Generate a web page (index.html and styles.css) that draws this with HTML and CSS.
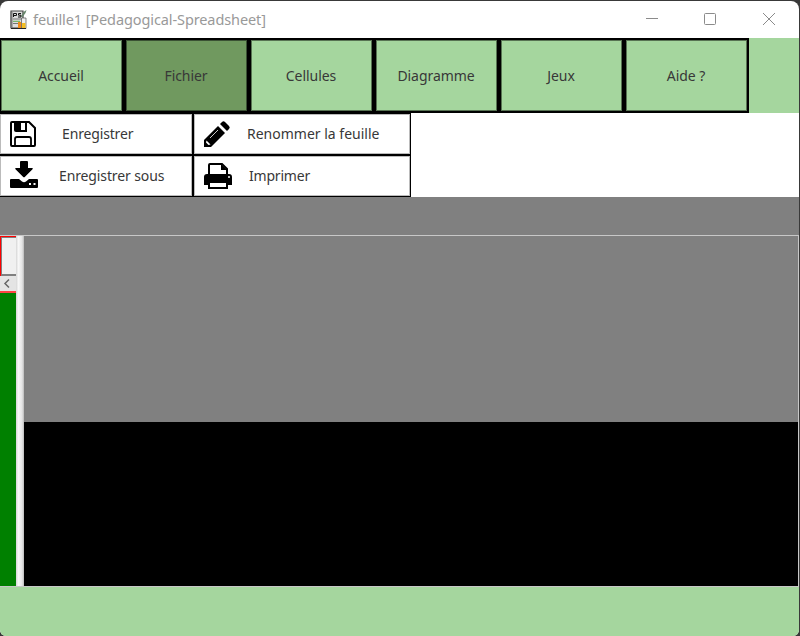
FILE: index.html
```html
<!DOCTYPE html>
<html lang="fr">
<head>
<meta charset="utf-8">
<title>feuille1 [Pedagogical-Spreadsheet]</title>
<link rel="stylesheet" href="styles.css">
</head>
<body>
<div class="window">
  <header class="titlebar">
    <svg class="app-icon" width="20" height="22" viewBox="0 0 20 22">
      <path d="M2 2h12v17H2z" fill="#ddd" stroke="#444" stroke-width="1.2"/>
      <path d="M1.500 3v16h2V3z" fill="#777"/>
      <path d="M4.500 8V4.500h3v2h-3M12 4.500H9.500v1.700H12V8H9" fill="none" stroke="#111"/>
      <path d="M4 10h9M4 14.500h5" stroke="#777"/><path d="M4 12.300h7" stroke="#62ad50"/>
      <path d="M12 8l2.500-5 3-2-1 3-3 4z" fill="#66856b"/>
      <path d="M9 13h3.500v6.500H9z" fill="#f08a18"/><path d="M12.500 9h4.500v10.500h-4.500z" fill="#eee" stroke="#555" stroke-width=".7"/>
      <path d="M13 14h3.500v5H13z" fill="#f4be20"/><path d="M2 19.500h15" stroke="#222"/>
    </svg>
    <h1 class="title"><span>feuille1 [Pedagogical-Spreadsheet]</span></h1>
    <svg class="controls" width="140" height="20" viewBox="0 0 140 20" fill="none" stroke="#8b8b8b">
      <path d="M6 8.500h12"/><rect x="64.500" y="3.500" width="11" height="11" rx="1"/><path d="M123 3l12 12M135 3l-12 12"/>
    </svg>
  </header>
  <nav class="tabs">
    <button class="tab">Accueil</button>
    <button class="tab active">Fichier</button>
    <button class="tab">Cellules</button>
    <button class="tab">Diagramme</button>
    <button class="tab">Jeux</button>
    <button class="tab">Aide ?</button>
  </nav>
  <section class="menu">
    <button class="item save">
      <svg width="28" height="28" viewBox="0 0 28 28"><path d="M2 2h17l6 6v17a1 1 0 0 1-1 1H2a1 1 0 0 1-1-1V3a1 1 0 0 1 1-1z" fill="#fff" stroke="#000" stroke-width="2"/><path d="M4 2h13v10H6q-2 0-2-2z"/><path d="M11 3h4v7h-4z" fill="#fff"/><path d="M5 26v-7q0-2 2-2h12q2 0 2 2v7" fill="none" stroke="#000" stroke-width="1.800"/></svg>
      <span>Enregistrer</span></button>
    <button class="item rename">
      <svg width="28" height="28" viewBox="0 0 28 28"><path d="M0 27v-7L14 6l7 7L7 27z"/><path d="M16 4l2-2q1.500-1.500 3 0l4 4q1.500 1.500 0 3l-2 2z"/><path d="M2.500 20.500l4 4-2 .500-2.500-2.500z" fill="#fff"/><path d="M6 18l8-8" stroke="#fff" stroke-width=".8"/></svg>
      <span>Renommer la feuille</span></button>
    <button class="item save-as">
      <svg width="28" height="28" viewBox="0 0 28 28"><path d="M10 0q0-1 1-1h6q1 0 1 1v6h4q1.500 0 .500 1.200l-7.500 7.500q-1 1-2 0L5.500 7.200Q4.500 6 6 6h4z"/><path d="M1 17h8l3 2.500q2 1.500 4 0l3-2.500h8q1 0 1 1v7q0 1-1 1H1q-1 0-1-1v-7q0-1 1-1z"/><path d="M19 21h2v2h-2zM23.500 21h2v2h-2z" fill="#fff"/></svg>
      <span>Enregistrer sous</span></button>
    <button class="item print">
      <svg width="28" height="28" viewBox="0 0 28 28"><path d="M5 14V3q0-1 1-1h12l5 5v7" fill="#fff" stroke="#000" stroke-width="2"/><path d="M17 2v6h6z"/><path d="M3 12h22q3 0 3 3v8h-5v-4H5v4H0v-8q0-3 3-3z"/><path d="M5 20h18v6H5z" fill="#fff" stroke="#000" stroke-width="2"/><path d="M6 8h10v2h6v2H6z" fill="#fff"/><circle cx="25" cy="15" r="1" fill="#fff"/></svg>
      <span>Imprimer</span></button>
  </section>
  <div class="formula-strip"></div>
  <main class="workspace">
    <aside class="side">
      <div class="list"></div>
      <div class="scroll"><svg width="16" height="15" viewBox="0 0 16 15"><path d="M9 3.500L5 7.500l4 4" fill="none" stroke="#666" stroke-width="1.500"/></svg></div>
    </aside>
    <div class="splitter"></div>
    <div class="sheet"><div class="sheet-view"></div></div>
  </main>
  <footer class="status"></footer>
</div>
</body>
</html>
```
FILE: styles.css
```css
* { box-sizing: border-box; }
body { margin: 0; background: #393939; overflow: hidden; font-family: "Noto Sans", "Open Sans", sans-serif; }
.window { width: 799px; height: 635px; margin-top: 1px; border-radius: 8px 8px 6px 6px; overflow: hidden; background: #fff; }
button { appearance: none; border-radius: 0; margin: 0; padding: 0; font: inherit; }
.titlebar { height: 37px; display: flex; align-items: center; padding-left: 9px; }
.app-icon { flex: none; }
.title { margin: 0 0 0 4px; padding-bottom: 2px; font-size: 14.500px; font-weight: 400; color: #999; width: 234px; white-space: nowrap; letter-spacing: -0.100px; }
.controls { margin-left: 373px; flex: none; }
.tabs { height: 75px; display: flex; background: #a5d69e; }
.tab { width: 125px; height: 75px; flex: none; border: 2px solid #000; box-shadow: inset 0 0 0 1px #587353; background: #a5d69e; color: #383838; font-size: 14px; letter-spacing: -0.060px; padding: 0 1px 1px 0; }
.tab:first-child { width: 124px; border-left-width: 1px; }
.tab.active { background: #70995f; box-shadow: inset 0 0 0 1px #3b5134; }
.menu { width: 411px; display: grid; grid-template-columns: 194px 217px; grid-template-rows: 42px 42px; }
.item { display: flex; align-items: center; background: #fff; border: solid #000; border-width: 1px 1px 1px 0; box-shadow: inset 1px 1px 0 #bbb, inset -1px -1px 0 #bbb; padding-left: 10px; color: #383838; font-size: 14px; white-space: nowrap; text-align: left; }
.save, .save-as { border-right-width: 2px; }
.item svg { flex: none; overflow: visible; }
.item span { padding-bottom: 2px; }
.save span { margin-left: 24px; letter-spacing: -0.150px; }
.save-as span { margin-left: 21px; letter-spacing: -0.120px; }
.rename span { margin-left: 15px; }
.print span { margin-left: 17px; letter-spacing: -0.200px; }
.formula-strip { height: 38px; background: #808080; }
.workspace { height: 352px; display: flex; border: solid #c8c8c8; border-width: 1px 1px 1px 0; }
.side { width: 16px; background: #008000; }
.list { height: 40px; background: #f0f0f0; border: solid #f00; border-width: 1px 0 0 1px; box-shadow: inset 1px 1px 0 #808080, inset 0 -2px 0 #808080; }
.scroll { height: 17px; background: #e4e4e4; border: 1px solid #f44; border-width: 0 0 2px; }
.scroll svg { display: block; }
.splitter { width: 8px; background: linear-gradient(90deg, #ddd 0 1px, #fafafa 2px, #e5e5e5 6px, #bbb); }
.sheet { flex: 1; background: #000; }
.sheet-view { height: 186px; background: #808080; }
.status { height: 50px; background: #a5d69e; }
```
